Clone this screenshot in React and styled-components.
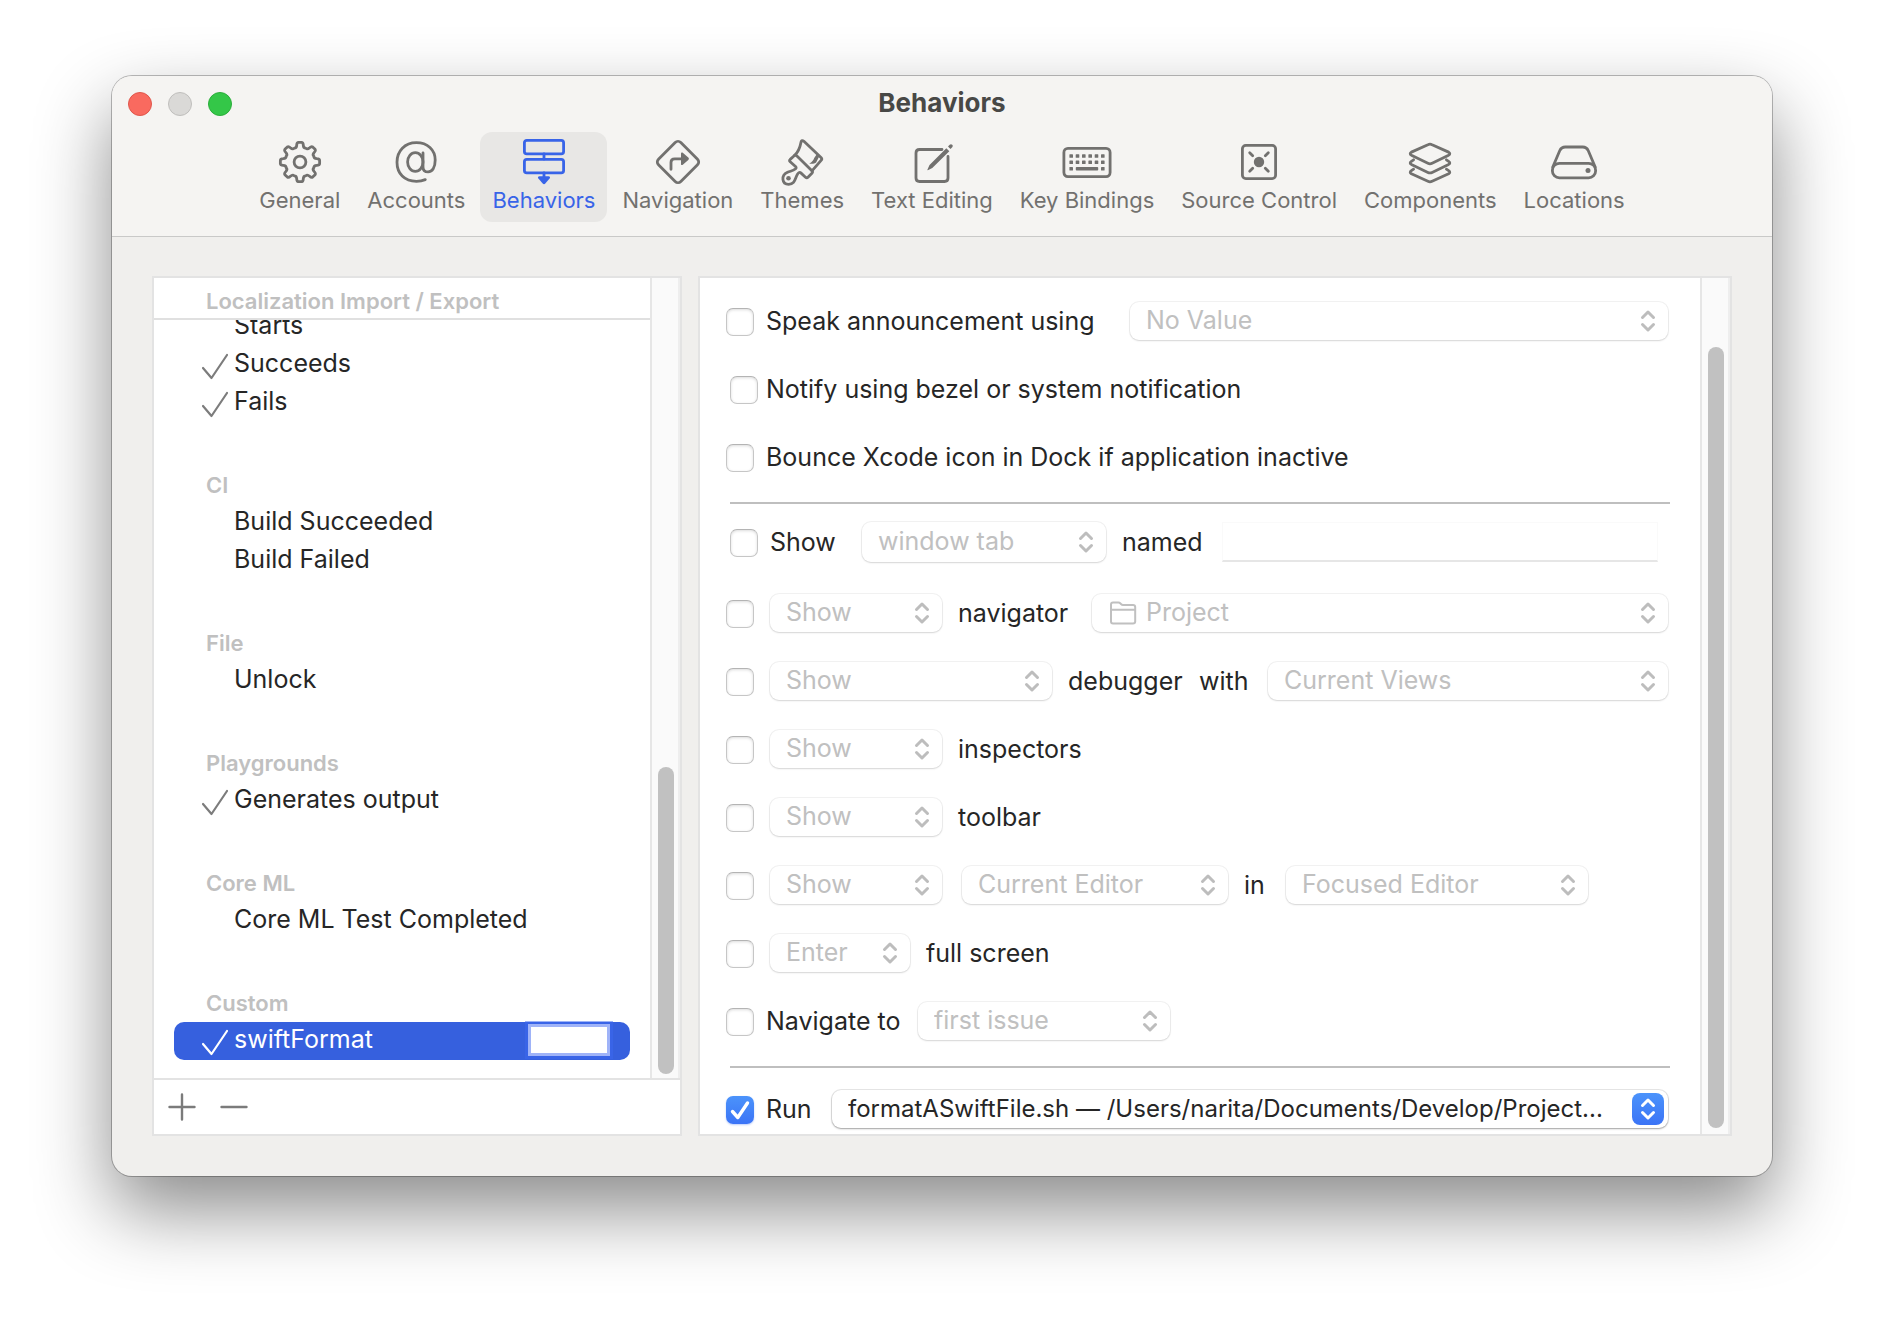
import React from "react";
import styled, { createGlobalStyle, css } from "styled-components";

const GlobalStyle = createGlobalStyle`
  *, *::before, *::after { box-sizing: border-box; }
  body {
    margin: 0;
    background: #fff;
    color: #262626;
    font-family: Inter, "Liberation Sans", sans-serif;
  }
  button, input, select { font-family: inherit; margin: 0; }
`;

/* ---------- window frame ---------- */

const Desktop = styled.div`
  min-height: 100vh;
  padding: 76px 112px 148px;
  overflow: hidden;
`;

const Window = styled.main`
  border-radius: 20px;
  background: #f0efed;
  box-shadow:
    0 0 0 1px rgba(0, 0, 0, 0.26),
    0 34px 76px rgba(0, 0, 0, 0.46);
`;

const Header = styled.header`
  display: grid;
  gap: 16px;
  padding: 16px 16px 14px;
  border-bottom: 1px solid #c9c9c8;
  border-radius: 20px 20px 0 0;
  background: #f5f4f2;
`;

const TitleBar = styled.div`
  display: grid;
  grid-template-columns: 1fr auto 1fr;
  align-items: start;
  height: 24px;
`;

const Lights = styled.div`
  display: flex;
  gap: 16px;
`;

const Light = styled.button`
  width: 24px;
  height: 24px;
  padding: 0;
  border: 1px solid ${(p) => p.$edge};
  border-radius: 50%;
  background: ${(p) => p.$fill};
`;

const Title = styled.h1`
  margin: 0;
  color: #484846;
  font-size: 26px;
  font-weight: 700;
  line-height: 22px;
`;

const Toolbar = styled.nav`
  display: flex;
  justify-content: center;
  gap: 3px;
`;

const Tab = styled.button`
  display: grid;
  justify-items: center;
  gap: 2px;
  padding: 7px 12px 9px;
  border: 0;
  border-radius: 12px;
  background: ${(p) => (p.$active ? "#e8e7e5" : "transparent")};
  color: ${(p) => (p.$active ? "#3864e8" : "#72716f")};
  font-size: 22px;
  line-height: 26px;
  white-space: nowrap;
`;

const Glyph = styled.svg`
  display: block;
  height: 46px;
  overflow: visible;
  fill: none;
  stroke: currentColor;
  stroke-width: 2.8;
  stroke-linecap: round;
  stroke-linejoin: round;

  .solid {
    fill: currentColor;
    stroke: none;
  }
`;

/* ---------- panels ---------- */

const Body = styled.div`
  display: grid;
  grid-template-columns: 530px 1fr;
  gap: 16px;
  padding: 39px 40px 40px;
`;

const Panel = styled.section`
  display: flex;
  flex-direction: column;
  min-width: 0;
  border: 2px solid #e3e3e3;
  background: #fff;
`;

const ScrollArea = styled.div`
  display: flex;
  flex: 1;
  min-height: 0;
`;

const ScrollContent = styled.div`
  flex: 1;
  min-width: 0;
  overflow: hidden;
`;

const Track = styled.div`
  display: flex;
  width: 30px;
  padding: ${(p) => p.$top}px 4px ${(p) => p.$bottom}px 6px;
  border-left: 2px solid #e6e6e6;
  border-right: 2px solid #eeeeee;
  background: #fafafa;
`;

const Thumb = styled.div`
  width: 16px;
  border-radius: 8px;
  background: #c1c1c1;
`;

/* ---------- event list ---------- */

const heading = css`
  margin: 0;
  color: #c0c0c0;
  font-size: 22px;
  font-weight: 600;
  line-height: 38px;
`;

const PinnedHeading = styled.h2`
  ${heading}
  position: relative;
  height: 42px;
  padding: 4px 52px 0;
  border-bottom: 2px solid #e0e0e0;
  background: #fff;
`;

const EventList = styled.div`
  display: grid;
  gap: 44px;
  margin-top: -12px;
  padding: 0 20px 18px;
`;

const GroupHeading = styled.h2`
  ${heading}
  padding-left: 32px;
`;

const Events = styled.ul`
  margin: 0;
  padding: 0;
  list-style: none;
`;

const EventRow = styled.li`
  display: flex;
  align-items: center;
  gap: 6px;
  height: 38px;
  padding: 0 20px 0 28px;
  border-radius: 10px;
  background: ${(p) => (p.$selected ? "#3660de" : "transparent")};
  color: ${(p) => (p.$selected ? "#fff" : "#262626")};
  font-size: 25px;
  line-height: 34px;
`;

const EventName = styled.span`
  flex: 1;
  padding-bottom: 4px;
`;

const Mark = styled.svg`
  width: 26px;
  height: 38px;
  fill: none;
  stroke: ${(p) => (p.$selected ? "#fff" : "#7c7c7c")};
  stroke-width: 2.2;
  stroke-linecap: round;
  stroke-linejoin: round;
`;

const ShortcutField = styled.input`
  width: 82px;
  height: 32px;
  margin-bottom: 2px;
  padding: 0 4px;
  border: 3px solid #9fb3f8;
  background: #fff;
  box-shadow: 0 0 0 3px rgba(60, 104, 240, 0.5);
  font-size: 22px;
  outline: none;
`;

const ListFooter = styled.footer`
  display: flex;
  align-items: center;
  gap: 24px;
  height: 56px;
  padding-left: 14px;
  border-top: 2px solid #e3e3e3;
`;

const IconButton = styled.button`
  display: grid;
  padding: 0;
  border: 0;
  background: none;
  color: #7b7b7b;
`;

const FooterGlyph = styled.svg`
  width: 28px;
  height: 28px;
  fill: none;
  stroke: currentColor;
  stroke-width: 2.4;
  stroke-linecap: round;
`;

/* ---------- settings form ---------- */

const Form = styled.form`
  padding: 9px 32px 0 26px;
`;

const Rule = styled.hr`
  height: 2px;
  margin: 11px -2px 0 4px;
  border: 0;
  background: #bfbfbf;
`;

const Row = styled.div`
  display: flex;
  align-items: center;
  gap: 16px;
  height: ${(p) => p.$height || 68}px;
`;

const RunGroup = styled.div`
  padding-top: 16px;
`;

const CheckLabel = styled.label`
  display: flex;
  flex: none;
  align-items: center;
  gap: ${(p) => (p.$tight ? 8 : 12)}px;
  padding-left: ${(p) => (p.$inset ? 4 : 0)}px;
`;

const Box = styled.span`
  display: grid;
  flex: none;
  margin-top: 2px;

  > * { grid-area: 1 / 1; }
`;

const BoxInput = styled.input`
  appearance: none;
  width: 28px;
  height: 28px;
  border: 1px solid #c6c6c6;
  border-top-color: #b4b4b4;
  border-radius: 7px;
  background: #fff;
  box-shadow: inset 0 1px 3px rgba(0, 0, 0, 0.14);

  &:checked {
    border: 0;
    background: linear-gradient(#4b93fb, #3b74f6);
    box-shadow: 0 1px 2px rgba(30, 90, 240, 0.3);
  }
`;

const BoxTick = styled.svg`
  width: 28px;
  height: 28px;
  pointer-events: none;
  fill: none;
  stroke: #fff;
  stroke-width: 3.4;
  stroke-linecap: round;
  stroke-linejoin: round;
`;

const Text = styled.span`
  flex: none;
  width: ${(p) => (p.$width ? p.$width + "px" : "auto")};
  font-size: 25px;
  line-height: 30px;
  white-space: nowrap;
`;

const PopUp = styled.span`
  display: grid;
  flex: ${(p) => (p.$width ? "none" : "1")};
  align-items: center;
  width: ${(p) => (p.$width ? p.$width + "px" : "auto")};
  min-width: 0;

  > * { grid-area: 1 / 1; }
  & + & { margin-left: 4px; }
`;

const Select = styled.select`
  appearance: none;
  width: 100%;
  height: ${(p) => (p.$tall ? 40 : 38)}px;
  padding: 0 36px 2px ${(p) => (p.$icon ? 54 : 16)}px;
  border: 0;
  border-radius: 9px;
  background: #fff;
  box-shadow:
    0 0 0 1px rgba(0, 0, 0, ${(p) => (p.disabled ? 0.05 : 0.09)}),
    0 1px 2px rgba(0, 0, 0, ${(p) => (p.disabled ? 0.12 : 0.3)});
  color: ${(p) => (p.disabled ? "#c0c0c0" : "#262626")};
  font-size: ${(p) => (p.disabled ? 25 : 24)}px;
  opacity: 1;
  text-overflow: ellipsis;
`;

const Chevrons = styled.svg`
  justify-self: end;
  width: 16px;
  height: 24px;
  margin-right: 12px;
  pointer-events: none;
  fill: none;
  stroke: #bdbdbd;
  stroke-width: 3;
  stroke-linecap: round;
  stroke-linejoin: round;
`;

const ChevronBadge = styled.span`
  display: grid;
  justify-self: end;
  place-items: center;
  width: 32px;
  height: 32px;
  margin-right: 4px;
  border-radius: 8px;
  background: linear-gradient(#4b93fb, #3b74f6);
  pointer-events: none;

  ${Chevrons} {
    justify-self: center;
    margin: 0;
    stroke: #fff;
  }
`;

const Folder = styled.svg`
  width: 28px;
  height: 24px;
  margin-left: 17px;
  pointer-events: none;
  fill: none;
  stroke: #c0c0c0;
  stroke-width: 2;
  stroke-linejoin: round;
`;

const NameField = styled.input`
  flex: 1;
  min-width: 0;
  height: 40px;
  margin-right: 10px;
  padding: 0 8px;
  border: 1px solid #fafafa;
  border-bottom: 2px solid #e6e6e6;
  background: #fff;
  font-size: 25px;
`;

/* ---------- toolbar icons ---------- */

const gearPath = (() => {
  const at = (deg, r) => {
    const a = ((deg - 90) * Math.PI) / 180;
    return `${(23 + r * Math.cos(a)).toFixed(2)} ${(23 + r * Math.sin(a)).toFixed(2)}`;
  };
  let d = "";
  for (let k = 0; k < 8; k++) {
    const c = k * 45;
    d += `${k ? "L" : "M"}${at(c - 11, 17.2)} Q${at(c - 9.5, 19.6)} ${at(c - 5, 19.7)} L${at(c + 5, 19.7)} Q${at(c + 9.5, 19.6)} ${at(c + 11, 17.2)} `;
    d += `Q${at(c + 14, 14.2)} ${at(c + 22.5, 15)} Q${at(c + 31, 14.2)} ${at(c + 34, 17.2)} `;
  }
  return d + "Z";
})();

const keyColumns = [9.2, 15.5, 21.8, 28.2, 34.5, 40.8];

const icons = {
  General: (
    <>
      <path d={gearPath} />
      <circle cx="23" cy="23" r="5.9" />
    </>
  ),
  Accounts: (
    <>
      <path d="M32.3 40.6C29.5 41.8 26.5 42.3 23.4 42.3 11.5 42.3 4 34.6 4 23.2 4 12 11.8 3.7 23.4 3.7c11 0 18.8 7 18.8 17.4 0 7.400-2.900 11.800-7.100 11.800-3.100 0-5.100-1.900-5.100-5V14" />
      <ellipse cx="22.300" cy="23" rx="7.700" ry="9.300" />
    </>
  ),
  Behaviors: (
    <>
      <rect x="3.400" y="1.400" width="39.200" height="13.400" rx="2.400" />
      <rect x="3.400" y="20.400" width="39.200" height="13.400" rx="2.400" />
      <path d="M23 15v5M23 34v4" />
      <path className="solid" d="M18.500 37.300h9c1.500 0 2 1.100 1.100 2.200l-4.300 5c-.8.900-1.800.900-2.600 0l-4.300-5c-.900-1.100-.4-2.200 1.100-2.200z" />
    </>
  ),
  Navigation: (
    <>
      <rect x="7.200" y="7.200" width="31.600" height="31.600" rx="4" transform="rotate(45 23 23)" />
      <path d="M16 30.300V23.500q0-3.700 3.700-3.700H27" />
      <path className="solid" d="M26 14.600c0-1.200 1-1.500 1.800-.9l5.500 4.900c.8.700.8 1.600 0 2.300l-5.500 4.900c-.8.600-1.800.3-1.800-.9z" />
    </>
  ),
  Themes: (
    <>
      <path d="M15.500 16.600C19.600 12.600 21.200 7.500 22 3.200q.7-2.700 2.900-.9L42 18.400q1.500 1.500.1 3L33 31.800" />
      <path d="M15.200 16.700l-4 3.700q-1.200 1.200 0 2.400l5.600 5q.9 1.100-.5 2.200C14 31.900 11.500 32 8.500 33.300 1.800 36.300 2.600 45.400 9.700 45.400c6.600 0 6.200-6.400 8.900-10.400q1.700-2.400 3.200-1.100l4.700 4.300q1.300 1.200 2.500 0l3.900-4q1.200-1.300 0-2.500L17.700 16.800q-1.300-1.100-2.500-.1z" />
      <path className="solid" d="M38.300 14.500l2.300 2.300-3.500 6.800c-1.500 1.300-4.500 1.500-6.900 1 2.700-1.500 4.500-3.500 5-5.600z" />
      <circle className="solid" cx="9.500" cy="39.200" r="2.300" />
    </>
  ),
  "Text Editing": (
    <>
      <path d="M33 10.500H10.500Q7 10.500 7 14v25q0 3.500 3.500 3.500h25q3.500 0 3.500-3.500V17.500" />
      <path className="solid" d="M18.500 30.400l2-4.300L37.300 9.200l3 3-17 16.900-4 2c-.6.200-1.100-.2-.8-.7z" />
      <path className="solid" d="M39 7.500l1.700-1.700c.8-.8 1.800-.7 2.500 0s.8 1.700 0 2.500l-1.700 1.800z" />
    </>
  ),
  "Key Bindings": (
    <>
      <rect x="1.900" y="9.400" width="46.200" height="28.200" rx="4" />
      {keyColumns.map((x) => (
        <g key={x} className="solid">
          <rect x={x - 1.8} y="15.200" width="3.600" height="3.600" rx=".6" />
          <rect x={x - 1.8} y="21.500" width="3.600" height="3.600" rx=".6" />
        </g>
      ))}
      <g className="solid">
        <rect x="7.400" y="27.900" width="3.600" height="3.600" rx=".6" />
        <rect x="13.800" y="27.900" width="22.400" height="3.600" rx=".8" />
        <rect x="39" y="27.900" width="3.600" height="3.600" rx=".6" />
      </g>
    </>
  ),
  "Source Control": (
    <>
      <rect x="6.400" y="6.400" width="33.200" height="33.200" rx="3.400" />
      <circle className="solid" cx="23" cy="23" r="5.200" />
      <path d="M13.700 13.700l3 3M32.300 13.700l-3 3M13.700 32.300l3-3M32.300 32.300l-3-3" />
    </>
  ),
  Components: (
    <>
      <path d="M20.900 5.700q2.100-1 4.200 0L41.600 13.100q2.400 1.500 0 3.100L25.100 24.300q-2.100 1-4.200 0L4.400 16.200q-2.400-1.600 0-3.100z" />
      <path d="M6.600 20.800L4.400 22.300q-2.400 1.600 0 3.100l16.500 8q2.100 1 4.200 0l16.500-8q2.400-1.500 0-3.100l-2.200-1.500" />
      <path d="M6.600 30.200l-2.200 1.500q-2.400 1.600 0 3.100l16.500 7.500q2.100 1 4.200 0l16.500-7.500q2.400-1.500 0-3.100l-2.200-1.500" />
    </>
  ),
  Locations: (
    <>
      <path d="M1.800 28L8.700 11.800Q10.300 8 14.300 8h17.400q4 0 5.600 3.800L44.200 28" />
      <rect x="1.400" y="24.300" width="43.200" height="14.600" rx="7" />
      <circle className="solid" cx="37" cy="31.500" r="2.500" />
    </>
  ),
};

const tabs = Object.keys(icons);

/* ---------- data ---------- */

const firstEvents = [
  { name: "Starts" },
  { name: "Succeeds", on: true },
  { name: "Fails", on: true },
];

const groups = [
  { title: "CI", events: [{ name: "Build Succeeded" }, { name: "Build Failed" }] },
  { title: "File", events: [{ name: "Unlock" }] },
  { title: "Playgrounds", events: [{ name: "Generates output", on: true }] },
  { title: "Core ML", events: [{ name: "Core ML Test Completed" }] },
  { title: "Custom", events: [{ name: "swiftFormat", on: true, selected: true }] },
];

/* ---------- parts ---------- */

function EventItems({ events }) {
  return (
    <Events>
      {events.map((e) => (
        <EventRow key={e.name} $selected={e.selected}>
          <Mark viewBox="0 0 26 38" $selected={e.selected} aria-hidden="true">
            {e.on && <path d="M1 22L9.500 32 25 9" />}
          </Mark>
          <EventName>{e.name}</EventName>
          {e.selected && <ShortcutField aria-label="Keyboard shortcut" />}
        </EventRow>
      ))}
    </Events>
  );
}

function Check({ id, label, checked }) {
  return (
    <Box>
      <BoxInput type="checkbox" id={id} aria-label={label} defaultChecked={checked} />
      {checked && (
        <BoxTick viewBox="0 0 28 28" aria-hidden="true">
          <path d="M6.500 15.500l5.300 6L21.500 7" />
        </BoxTick>
      )}
    </Box>
  );
}

function Labelled({ children, width, inset, tight, checked }) {
  return (
    <CheckLabel $inset={inset} $tight={tight}>
      <Check checked={checked} />
      <Text $width={width}>{children}</Text>
    </CheckLabel>
  );
}

const chevronPath = "M2.500 8.500L8 3l5.500 5.500M2.500 15.500L8 21l5.500-5.500";

function Menu({ value, label, width, folder, tall, active }) {
  return (
    <PopUp $width={width}>
      <Select aria-label={label} disabled={!active} $icon={folder} $tall={tall}>
        <option>{value}</option>
      </Select>
      {folder && (
        <Folder viewBox="0 0 28 24" aria-hidden="true">
          <path d="M2 20.500V3.500q0-2 2-2h5.500q1 0 1.700.7l1 1q.7.700 1.700.700H24q2.200 0 2.200 2.200V20.500q0 2-2.200 2H4q-2 0-2-2zM2 8.800h24" />
        </Folder>
      )}
      {active ? (
        <ChevronBadge>
          <Chevrons viewBox="0 0 16 24" aria-hidden="true">
            <path d={chevronPath} />
          </Chevrons>
        </ChevronBadge>
      ) : (
        <Chevrons viewBox="0 0 16 24" aria-hidden="true">
          <path d={chevronPath} />
        </Chevrons>
      )}
    </PopUp>
  );
}

export default function App() {
  return (
    <Desktop>
      <GlobalStyle />
      <Window>
        <Header>
          <TitleBar>
            <Lights>
              <Light type="button" aria-label="Close" $fill="#f96a5f" $edge="#e0564b" />
              <Light type="button" aria-label="Minimize" $fill="#dad9d7" $edge="#c0bfbd" />
              <Light type="button" aria-label="Zoom" $fill="#34c748" $edge="#2bae3b" />
            </Lights>
            <Title>Behaviors</Title>
          </TitleBar>
          <Toolbar>
            {tabs.map((name) => {
              const w = name === "Key Bindings" ? 50 : 46;
              return (
                <Tab key={name} type="button" $active={name === "Behaviors"}>
                  <Glyph width={w} viewBox={`0 0 ${w} 46`} aria-hidden="true">
                    {icons[name]}
                  </Glyph>
                  {name}
                </Tab>
              );
            })}
          </Toolbar>
        </Header>

        <Body>
          <Panel>
            <ScrollArea>
              <ScrollContent>
                <PinnedHeading>Localization Import / Export</PinnedHeading>
                <EventList>
                  <EventItems events={firstEvents} />
                  {groups.map((g) => (
                    <section key={g.title}>
                      <GroupHeading>{g.title}</GroupHeading>
                      <EventItems events={g.events} />
                    </section>
                  ))}
                </EventList>
              </ScrollContent>
              <Track $top={489} $bottom={4}>
                <Thumb />
              </Track>
            </ScrollArea>
            <ListFooter>
              <IconButton type="button" aria-label="Add">
                <FooterGlyph viewBox="0 0 28 28">
                  <path d="M1.500 14h25M14 1.500v25" />
                </FooterGlyph>
              </IconButton>
              <IconButton type="button" aria-label="Remove">
                <FooterGlyph viewBox="0 0 28 28">
                  <path d="M1.500 14h25" />
                </FooterGlyph>
              </IconButton>
            </ListFooter>
          </Panel>

          <Panel>
            <ScrollArea>
              <ScrollContent>
                <Form>
                  <Row>
                    <Labelled width={348}>Speak announcement using</Labelled>
                    <Menu value="No Value" label="Voice" />
                  </Row>
                  <Row>
                    <Labelled inset tight>Notify using bezel or system notification</Labelled>
                  </Row>
                  <Row>
                    <Labelled>Bounce Xcode icon in Dock if application inactive</Labelled>
                  </Row>
                  <Rule />
                  <Row $height={75}>
                    <Labelled inset width={76}>Show</Labelled>
                    <Menu value="window tab" label="Window or tab" width={244} tall />
                    <Text as="label" htmlFor="tab-name" $width={84}>named</Text>
                    <NameField id="tab-name" disabled />
                  </Row>
                  <Row>
                    <Check label="Navigator" />
                    <Menu value="Show" label="Navigator action" width={172} />
                    <Text $width={118}>navigator</Text>
                    <Menu value="Project" label="Navigator" folder />
                  </Row>
                  <Row>
                    <Check label="Debugger" />
                    <Menu value="Show" label="Debugger action" width={282} />
                    <Text $width={115}>debugger</Text>
                    <Text $width={53}>with</Text>
                    <Menu value="Current Views" label="Debugger views" />
                  </Row>
                  <Row>
                    <Check label="Inspectors" />
                    <Menu value="Show" label="Inspectors action" width={172} />
                    <Text>inspectors</Text>
                  </Row>
                  <Row>
                    <Check label="Toolbar" />
                    <Menu value="Show" label="Toolbar action" width={172} />
                    <Text>toolbar</Text>
                  </Row>
                  <Row>
                    <Check label="Editor" />
                    <Menu value="Show" label="Editor action" width={172} />
                    <Menu value="Current Editor" label="Editor mode" width={266} />
                    <Text $width={26}>in</Text>
                    <Menu value="Focused Editor" label="Editor target" width={302} />
                  </Row>
                  <Row>
                    <Check label="Full screen" />
                    <Menu value="Enter" label="Full screen action" width={140} />
                    <Text>full screen</Text>
                  </Row>
                  <Row>
                    <Labelled width={136}>Navigate to</Labelled>
                    <Menu value="first issue" label="Issue" width={252} />
                  </Row>
                  <Rule />
                  <RunGroup>
                    <Row $height={50}>
                      <Labelled width={50} checked>Run</Labelled>
                      <Menu
                        active
                        label="Script"
                        value="formatASwiftFile.sh — /Users/narita/Documents/Develop/Project..."
                      />
                    </Row>
                  </RunGroup>
                </Form>
              </ScrollContent>
              <Track $top={69} $bottom={6}>
                <Thumb />
              </Track>
            </ScrollArea>
          </Panel>
        </Body>
      </Window>
    </Desktop>
  );
}
